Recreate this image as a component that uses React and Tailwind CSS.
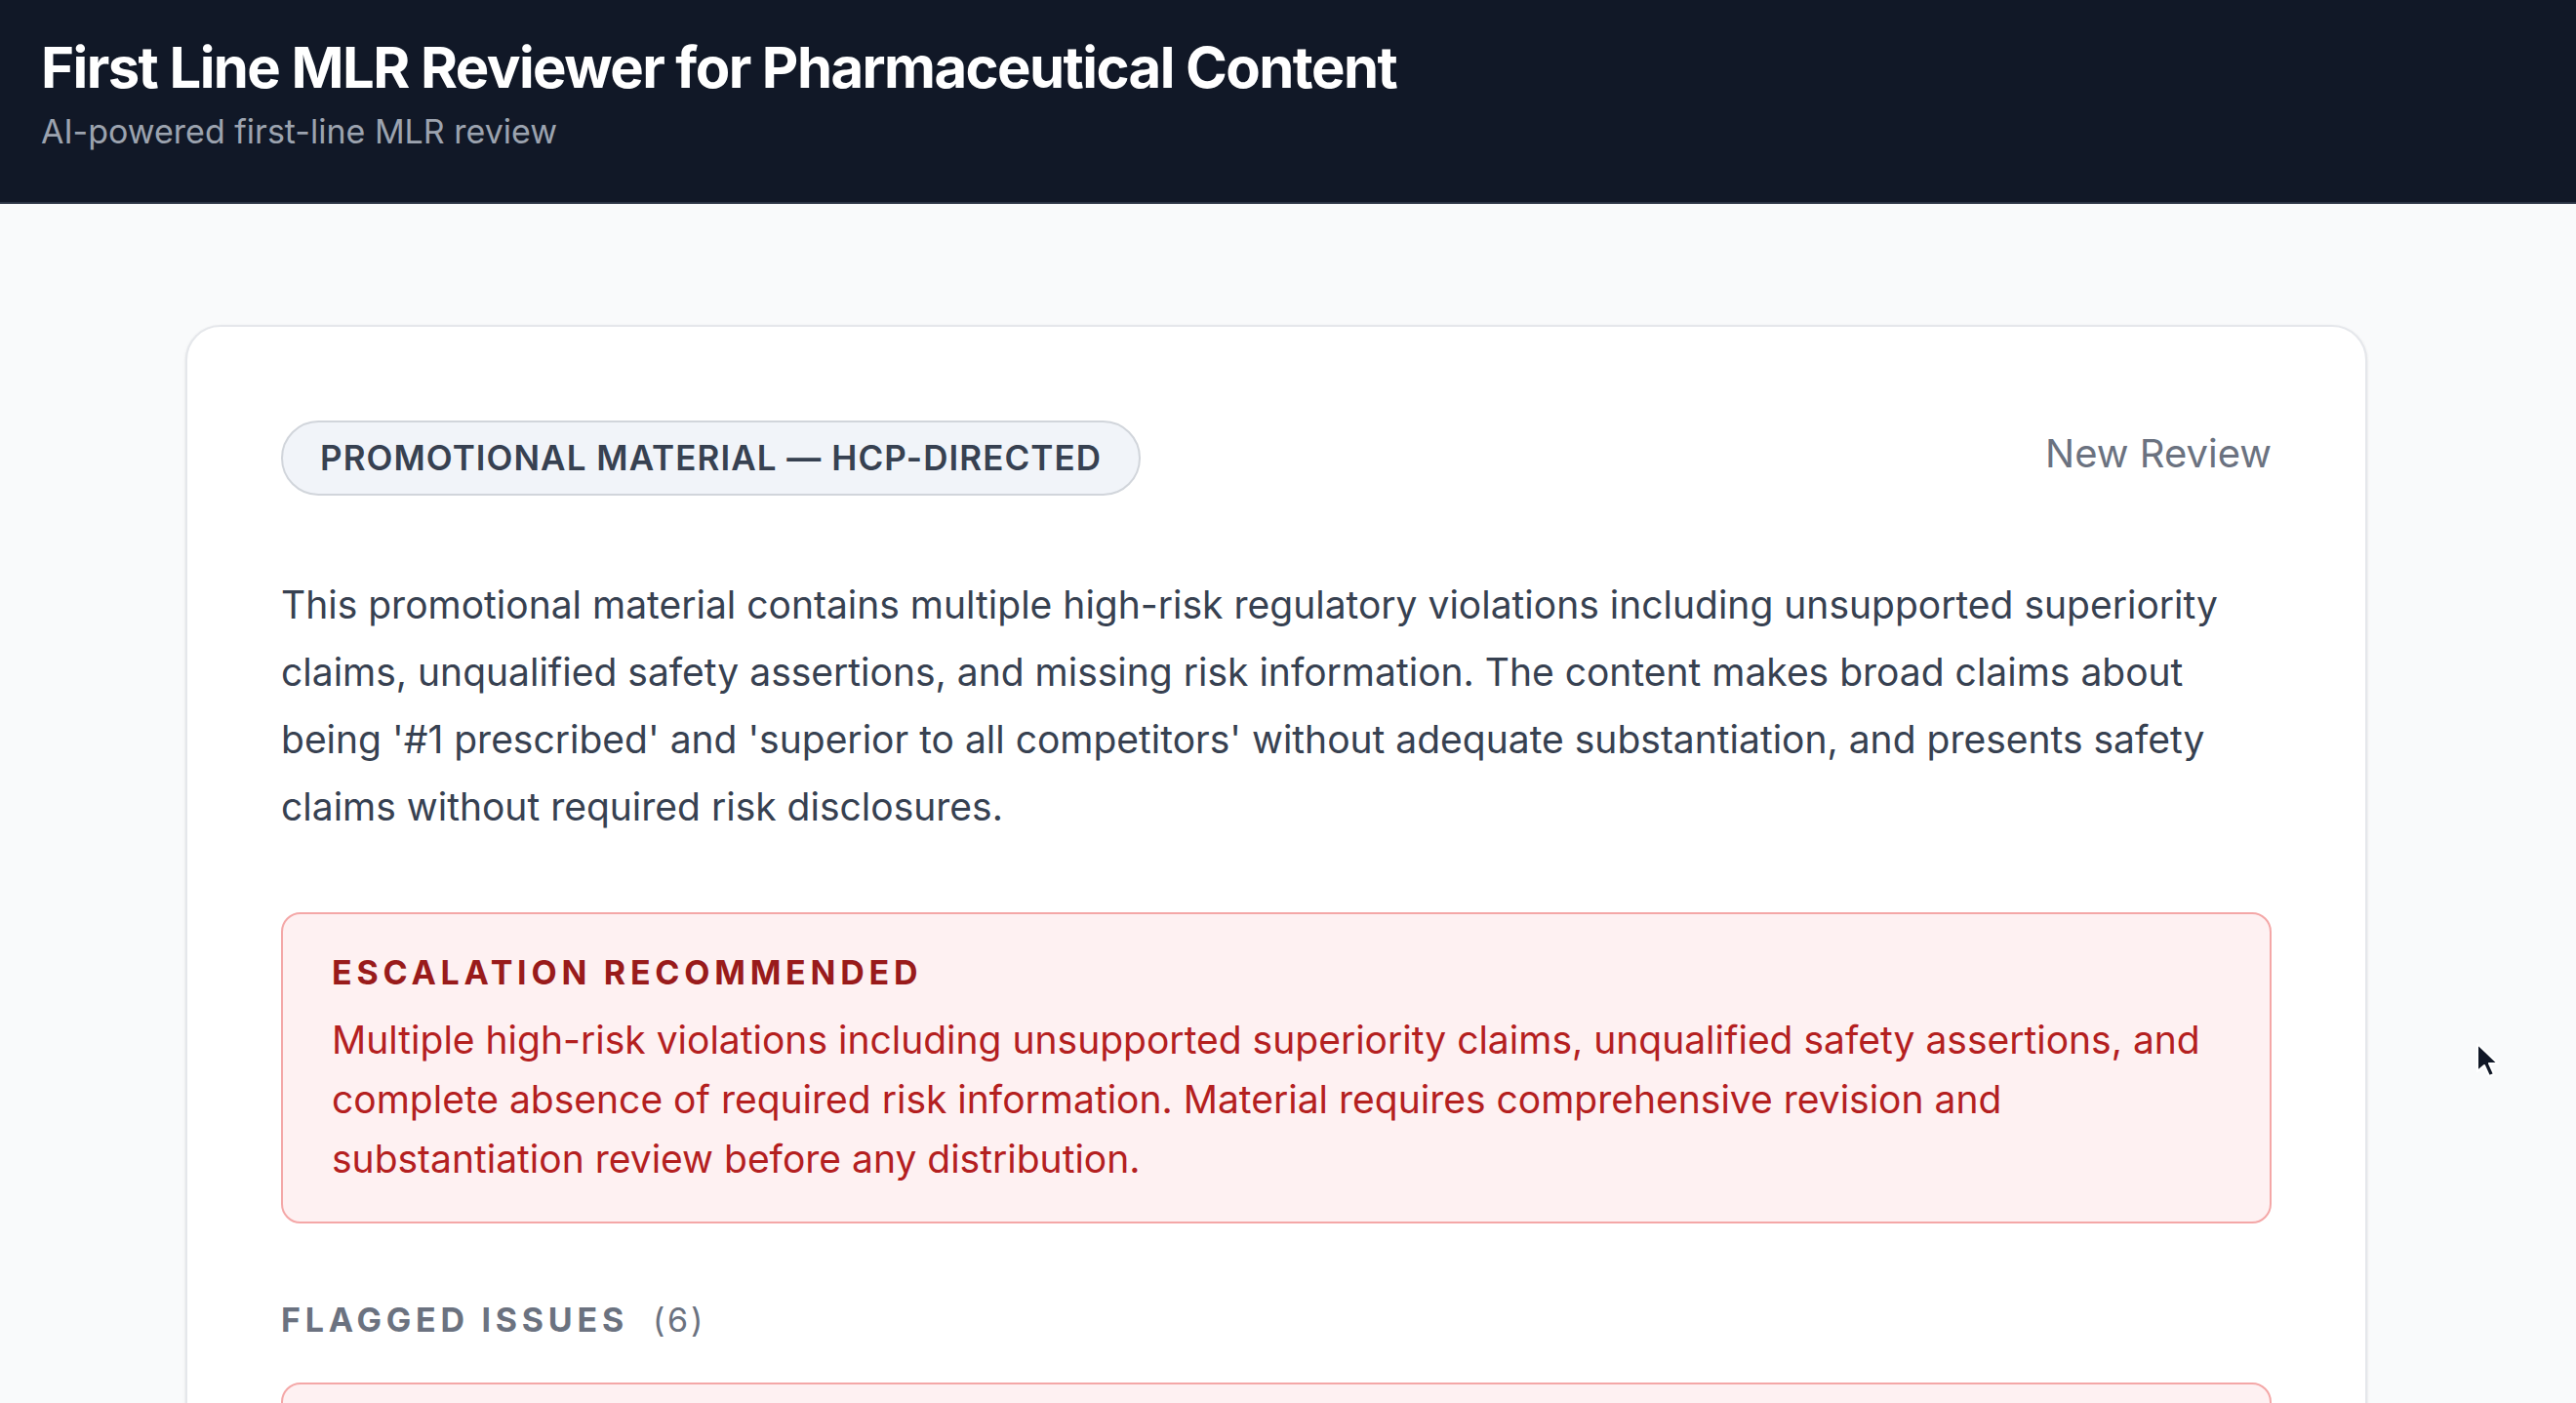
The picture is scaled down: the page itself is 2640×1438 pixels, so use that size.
import React from "react";

export default function App() {
  return (
    <div
      className="relative min-h-screen bg-[#f9fafb]"
      style={{ fontFamily: 'Inter, "Noto Sans", sans-serif' }}
    >
      <header className="h-[209px] bg-[#111827] border-b-2 border-[#2b3444] px-[42px] pt-[34px]">
        <h1 className="text-[58px] leading-[70px] font-bold tracking-[-0.027em] text-white">
          First Line MLR Reviewer for Pharmaceutical Content
        </h1>
        <p className="mt-[9px] text-[34px] leading-[44px] text-[#9ca3af]">
          AI-powered first-line MLR review
        </p>
      </header>

      <main className="pl-[190px] pt-[124px]">
        <div className="w-[2236px] rounded-[36px] border-2 border-[#e5e7eb] bg-white px-[96px] pt-[96px] pb-[80px] shadow-sm">
          <div className="flex items-center justify-between">
            <span className="inline-flex h-[77px] items-center rounded-full border-2 border-[#d1d5db] bg-[#f1f4f9] px-[38px] text-[35px] font-semibold tracking-[0.03em] text-[#374151]">
              PROMOTIONAL MATERIAL — HCP-DIRECTED
            </span>
            <button className="mb-[10px] text-[40px] leading-[48px] text-[#6b7280]">
              New Review
            </button>
          </div>

          <p className="mt-[77px] text-[39px] leading-[69px] text-[#374151]">
            This promotional material contains multiple high-risk regulatory
            violations including unsupported superiority claims, unqualified
            safety assertions, and missing risk information. The content makes
            broad claims about being '#1 prescribed' and 'superior to all
            competitors' without adequate substantiation, and presents safety
            claims without required risk disclosures.
          </p>

          <div className="mt-[74px] rounded-[20px] border-2 border-[#f4a7a7] bg-[#fef1f2] pl-[50px] pr-[50px] pt-[40px] pb-[34px]">
            <div className="text-[34px] leading-[40px] font-bold tracking-[0.14em] text-[#991b1b]">
              ESCALATION RECOMMENDED
            </div>
            <p className="mt-[18px] text-[39px] leading-[61px] text-[#b4201f]">
              Multiple high-risk violations including unsupported superiority
              claims, unqualified safety assertions, and complete absence of
              required risk information. Material requires comprehensive
              revision and substantiation review before any distribution.
            </p>
          </div>

          <div className="mt-[79px] flex items-baseline text-[34px] leading-[40px] text-[#6b7280]">
            <span className="font-bold tracking-[0.14em]">FLAGGED ISSUES</span>
            <span className="ml-[25px] tracking-[0.08em]">(6)</span>
          </div>

          <div className="mt-[44px] h-[260px] rounded-[20px] border-2 border-[#f4a7a7] bg-[#fef1f2]"></div>
        </div>
      </main>

      <svg
        className="absolute left-[2536px] top-[1068px]"
        width="26"
        height="38"
        viewBox="0 0 26 38"
      >
        <path
          d="M3 2 L3 30 L10 24 L15 35 L20 33 L15 22 L24 22 Z"
          fill="#111827"
          stroke="#ffffff"
          strokeWidth="2"
          strokeLinejoin="round"
        />
      </svg>
    </div>
  );
}
